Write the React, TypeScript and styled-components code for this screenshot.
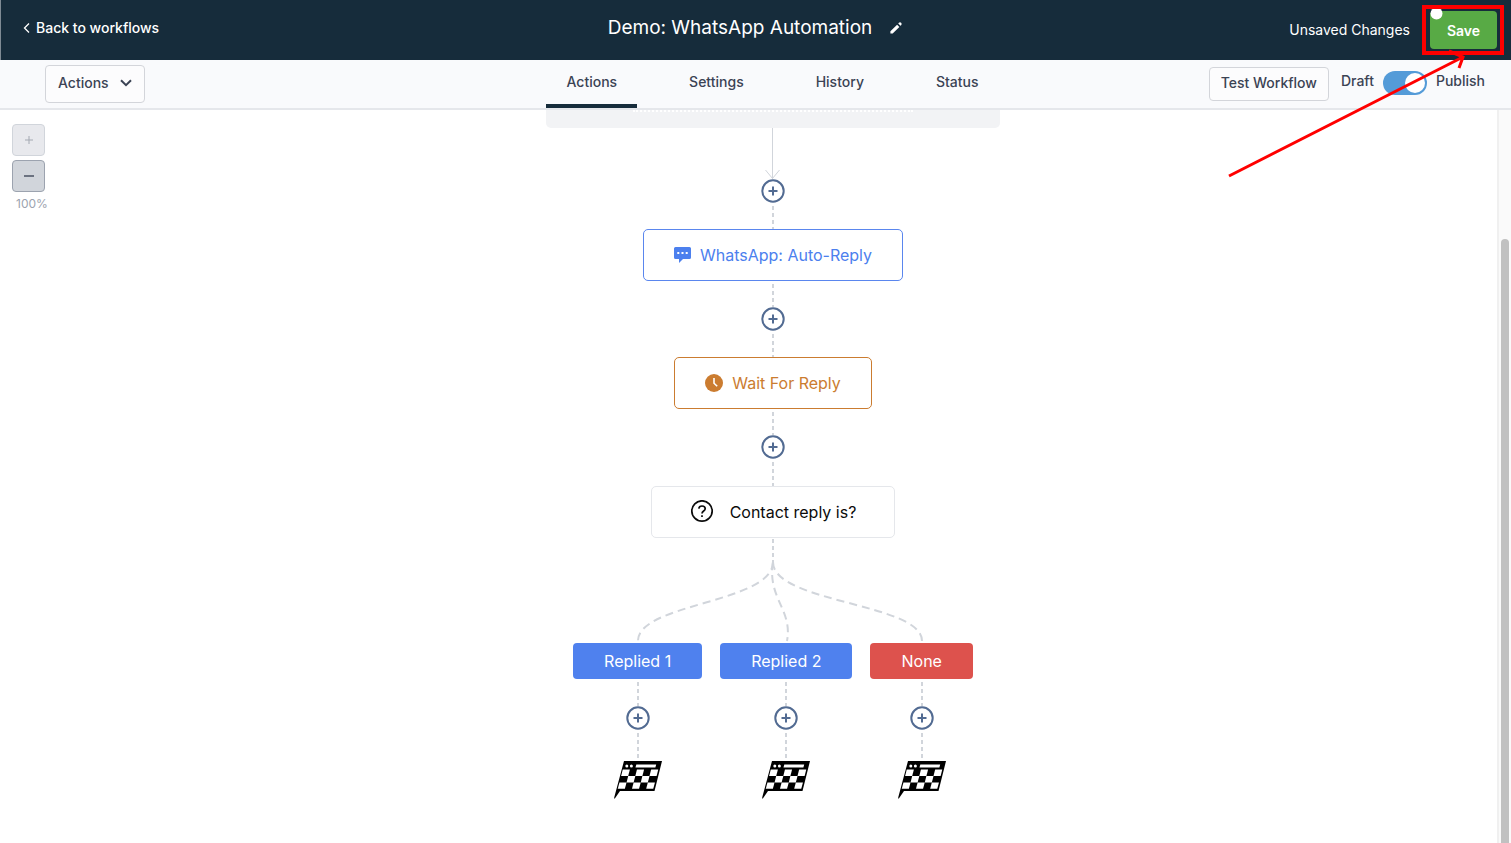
import React, { useState } from 'react';
import styled, { createGlobalStyle, css } from 'styled-components';

const GlobalStyle = createGlobalStyle`
  *, *::before, *::after { box-sizing: border-box; }
  body { margin: 0; background: #ffffff; }
  body, button, input { font-family: Inter, "Liberation Sans", sans-serif; }
`;

const Page = styled.div`
  display: flex;
  flex-direction: column;
  min-height: 100vh;
  color: #3b4354;
  font-size: 14px;
  line-height: 20px;
`;

const Header = styled.header`
  display: grid;
  grid-template-columns: 1fr auto 1fr;
  align-items: center;
  height: 60px;
  padding: 0 14px;
  border-left: 1px solid #7f8b94;
  background: #162c3b;
  color: #ffffff;
`;

const BackLink = styled.a`
  display: inline-flex;
  align-items: center;
  justify-self: start;
  gap: 5px;
  padding: 0 0 4px 7px;
  color: #ffffff;
  font-weight: 500;
  text-decoration: none;
`;

const TitleGroup = styled.div`
  display: flex;
  align-items: center;
  gap: 16px;
  padding-bottom: 4px;
`;

const Title = styled.h1`
  margin: 0;
  font-size: 19px;
  font-weight: 400;
  line-height: 28px;
`;

const IconButton = styled.button`
  display: flex;
  padding: 0;
  border: 0;
  background: none;
  color: inherit;
`;

const SaveGroup = styled.div`
  display: flex;
  align-items: center;
  justify-self: end;
  gap: 20px;
`;

const SaveSlot = styled.div`
  position: relative;
  display: flex;
`;

const SaveButton = styled.button`
  width: 67px;
  height: 38px;
  padding: 0;
  border: 0;
  border-radius: 4px;
  background: #58aa45;
  color: #ffffff;
  font-size: 14px;
  font-weight: 600;
`;

const Callout = styled.svg`
  position: absolute;
  top: -11px;
  right: -14px;
  z-index: 5;
  pointer-events: none;
`;

const SubBar = styled.div`
  display: grid;
  grid-template-columns: 1fr auto 1fr;
  height: 50px;
  padding: 0 11px 0 45px;
  border-bottom: 2px solid #e5e7eb;
  background: #f9fafc;
`;

const OutlineButton = styled.button<{ $size: 'menu' | 'plain' }>`
  display: flex;
  align-items: center;
  justify-content: center;
  gap: 11px;
  border: 1px solid #d3d5da;
  border-radius: 4px;
  background: #fcfcfd;
  color: #3b4354;
  font-size: 14px;
  font-weight: 500;
  line-height: 20px;
  white-space: nowrap;
  ${({ $size }) =>
    $size === 'menu'
      ? css`
          align-self: start;
          justify-self: start;
          height: 38px;
          margin-top: 5px;
          padding: 0 12px 2px;
        `
      : css`
          height: 34px;
          margin-top: 7px;
          padding: 0 11px 2px;
        `}
`;

const Tabs = styled.nav`
  display: flex;
  gap: 32px;
`;

const Tab = styled.a<{ $active?: boolean }>`
  height: 48px;
  padding: 12px 20px 0;
  border-bottom: 4px solid ${({ $active }) => ($active ? '#162c3b' : 'transparent')};
  color: #3b4354;
  font-weight: 500;
  text-decoration: none;
`;

const PublishGroup = styled.div`
  display: flex;
  align-items: flex-start;
  justify-self: end;
  padding-right: 15px;
`;

const SwitchLabel = styled.label`
  display: flex;
  align-items: flex-start;
  gap: 9px;
  margin: 11px 0 0 12px;
  font-weight: 500;
`;

const Switch = styled.input`
  appearance: none;
  display: flex;
  align-items: center;
  width: 44px;
  height: 24px;
  margin: 0;
  padding: 0 2px;
  border-radius: 12px;
  background: #549bd8;
  &::before {
    content: '';
    width: 20px;
    height: 20px;
    border-radius: 50%;
    background: #ffffff;
  }
  &:checked { justify-content: flex-end; }
`;

const Workspace = styled.div`
  display: flex;
  flex: 1;
`;

const ZoomPanel = styled.aside`
  display: flex;
  flex-direction: column;
  gap: 4px;
  width: 49px;
  padding: 14px 0 0 12px;
  color: #9ca3af;
  font-size: 12px;
  line-height: 16px;
`;

const ZoomButton = styled.button<{ $on?: boolean }>`
  display: flex;
  align-items: center;
  justify-content: center;
  width: 33px;
  height: 32px;
  padding: 0;
  border: 1px solid ${({ $on }) => ($on ? '#9ca3af' : '#d1d5db')};
  border-radius: 4px;
  background: ${({ $on }) => ($on ? '#d1d5db' : '#e8e9ed')};
  color: ${({ $on }) => ($on ? '#6b7280' : '#a4a9b2')};
`;

const ZoomValue = styled.output`
  padding-left: 4px;
`;

const Flow = styled.main`
  display: flex;
  flex: 1;
  flex-direction: column;
  align-items: center;
  padding-bottom: 40px;
`;

const TriggerPanel = styled.section`
  display: flex;
  justify-content: center;
  width: 454px;
  height: 18px;
  border-radius: 0 0 5px 5px;
  background: #f2f3f5;
`;

const TriggerEdge = styled.div`
  width: 280px;
  height: 2px;
  border-bottom: 2px dotted #ffffff;
`;

const Connector = styled.div<{ $h: number }>`
  width: 2px;
  height: ${({ $h }) => $h}px;
  background: repeating-linear-gradient(to bottom, transparent 0 3px, #d1d5db 3px 7px);
`;

const AddButton = styled.button`
  display: flex;
  padding: 0;
  border: 0;
  border-radius: 50%;
  background: #ffffff;
  color: #526b92;
`;

const tones = {
  blue: { line: '#5a86ee', text: '#4c80ee' },
  orange: { line: '#cb7c30', text: '#cb7c30' },
  plain: { line: '#e5e7eb', text: '#0b0b0b' },
};

const StepCard = styled.button<{ $tone: keyof typeof tones; $gap: number; $pad: number }>`
  display: flex;
  align-items: center;
  gap: ${({ $gap }) => $gap}px;
  height: 52px;
  padding: 0 ${({ $pad }) => $pad}px;
  border: 1px solid ${({ $tone }) => tones[$tone].line};
  border-radius: 5px;
  background: #ffffff;
  color: ${({ $tone }) => tones[$tone].text};
  font-size: 16px;
  white-space: nowrap;
`;

const Branches = styled.div`
  display: flex;
  gap: 18px;
`;

const Branch = styled.div`
  display: flex;
  flex-direction: column;
  align-items: center;
`;

const BranchButton = styled.button<{ $danger?: boolean }>`
  height: 36px;
  padding: 0 31px;
  border: 0;
  border-radius: 4px;
  background: ${({ $danger }) => ($danger ? '#dd524d' : '#4f81ee')};
  color: #ffffff;
  font-size: 16px;
  white-space: nowrap;
`;

const ScrollTrack = styled.div`
  display: flex;
  width: 14px;
  padding: 129px 2px 0 2px;
  border-left: 2px solid #f0f0f0;
  background: #fafafa;
`;

const ScrollThumb = styled.div`
  flex: 1;
  border-radius: 4px 4px 0 0;
  background: #c1c1c1;
`;

const AddStep = () => (
  <AddButton type="button" aria-label="Add step">
    <svg width="24" height="24" viewBox="0 0 24 24" fill="none" stroke="currentColor" strokeWidth="2">
      <circle cx="12" cy="12" r="10.7" />
      <path d="M12 7.5v9M7.5 12h9" />
    </svg>
  </AddButton>
);

const flagRows = [
  { top: 8.6, bottom: 15, cells: [0, 2, 4] },
  { top: 15, bottom: 21.4, cells: [1, 3] },
  { top: 21.4, bottom: 27.8, cells: [0, 2, 4] },
];

/* The flag leans: its left edge moves 2px to the left for every 8px down. */
const flagX = (col: number, y: number) => 11 - y * 0.26 + col * 7.1;

const FinishFlag = () => (
  <svg width="48" height="38" viewBox="0 0 48 38">
    <path d="M10 0H48L40.5 30H6L0.5 38L0.2 36.5Z" fill="#000000" />
    <circle cx="12.8" cy="5" r="1.5" fill="#ffffff" />
    <circle cx="17.4" cy="5" r="1.5" fill="#ffffff" />
    <path d="M22.3 3.4H42.2L41.4 6.6H21.5Z" fill="#ffffff" />
    {flagRows.map(({ top, bottom, cells }) =>
      cells.map((col) => (
        <path
          key={`${top}-${col}`}
          d={`M${flagX(col, top)} ${top}H${flagX(col + 1, top)}L${flagX(col + 1, bottom)} ${bottom}H${flagX(col, bottom)}Z`}
          fill="#ffffff"
        />
      )),
    )}
  </svg>
);

const branches = [
  { name: 'Replied 1', danger: false },
  { name: 'Replied 2', danger: false },
  { name: 'None', danger: true },
];

export default function App() {
  const [published, setPublished] = useState(true);
  return (
    <Page>
      <GlobalStyle />
      <Header>
        <BackLink href="#workflows">
          <svg width="9" height="12" viewBox="0 0 9 12" fill="none" stroke="currentColor" strokeWidth="1.3">
            <path d="M7 1.5L2.5 6L7 10.5" />
          </svg>
          Back to workflows
        </BackLink>
        <TitleGroup>
          <Title>Demo: WhatsApp Automation</Title>
          <IconButton type="button" aria-label="Rename workflow">
            <svg width="16" height="16" viewBox="0 0 20 20" fill="currentColor">
              <path d="M13.586 3.586a2 2 0 112.828 2.828l-.793.793-2.828-2.828.793-.793zM11.379 5.793L3 14.172V17h2.828l8.38-8.379-2.83-2.828z" />
            </svg>
          </IconButton>
        </TitleGroup>
        <SaveGroup>
          <span>Unsaved Changes</span>
          <SaveSlot>
            <SaveButton type="button">Save</SaveButton>
            <Callout width="290" height="180" viewBox="0 0 290 180" fill="none" stroke="#ff0000" aria-hidden="true">
              <circle cx="215.5" cy="13.5" r="6" fill="#ffffff" stroke="none" />
              <rect x="203" y="7" width="78" height="46" strokeWidth="4" />
              <path d="M8 176L242 57M228 51L242 57L238 68" strokeWidth="3" />
            </Callout>
          </SaveSlot>
        </SaveGroup>
      </Header>
      <SubBar>
        <OutlineButton type="button" $size="menu">
          Actions
          <svg width="12" height="8" viewBox="0 0 12 8" fill="none" stroke="currentColor" strokeWidth="2">
            <path d="M1 1.2L6 6.2L11 1.2" />
          </svg>
        </OutlineButton>
        <Tabs>
          <Tab href="#actions" $active>Actions</Tab>
          <Tab href="#settings">Settings</Tab>
          <Tab href="#history">History</Tab>
          <Tab href="#status">Status</Tab>
        </Tabs>
        <PublishGroup>
          <OutlineButton type="button" $size="plain">Test Workflow</OutlineButton>
          <SwitchLabel>
            Draft
            <Switch type="checkbox" checked={published} onChange={() => setPublished(!published)} />
            Publish
          </SwitchLabel>
        </PublishGroup>
      </SubBar>
      <Workspace>
        <ZoomPanel>
          <ZoomButton type="button" aria-label="Zoom in">
            <svg width="8" height="8" viewBox="0 0 8 8" stroke="currentColor"><path d="M4 0V8M0 4H8" /></svg>
          </ZoomButton>
          <ZoomButton type="button" aria-label="Zoom out" $on>
            <svg width="10" height="8" viewBox="0 0 10 8" stroke="currentColor" strokeWidth="2"><path d="M0 4H10" /></svg>
          </ZoomButton>
          <ZoomValue>100%</ZoomValue>
        </ZoomPanel>
        <Flow>
          <TriggerPanel><TriggerEdge /></TriggerPanel>
          <svg width="16" height="51" viewBox="0 0 16 51" fill="none" stroke="#d1d5db">
            <path d="M7.5 0V51M0.5 42L7.5 50.5L14.5 42" />
          </svg>
          <AddStep />
          <Connector $h={26} />
          <StepCard type="button" $tone="blue" $gap={9} $pad={30}>
            <svg width="17" height="16" viewBox="0 0 17 16">
              <path d="M1.5 0h14A1.5 1.5 0 0 1 17 1.5V10.5A1.5 1.5 0 0 1 15.5 12H9L5 16V12H1.5A1.5 1.5 0 0 1 0 10.5V1.5A1.5 1.5 0 0 1 1.5 0Z" fill="currentColor" />
              <path d="M3.3 5h2v2h-2zM7.5 5h2v2h-2zM11.7 5h2v2h-2z" fill="#ffffff" />
            </svg>
            WhatsApp: Auto-Reply
          </StepCard>
          <Connector $h={26} />
          <AddStep />
          <Connector $h={26} />
          <StepCard type="button" $tone="orange" $gap={9} $pad={30}>
            <svg width="18" height="18" viewBox="0 0 18 18">
              <circle cx="9" cy="9" r="9" fill="currentColor" />
              <path d="M9 4V9.2L12.2 12.3" fill="none" stroke="#ffffff" strokeWidth="1.6" />
            </svg>
            Wait For Reply
          </StepCard>
          <Connector $h={26} />
          <AddStep />
          <Connector $h={27} />
          <StepCard type="button" $tone="plain" $gap={16} $pad={38}>
            <svg width="24" height="24" viewBox="0 0 24 24" fill="none" stroke="currentColor" strokeWidth="1.7">
              <circle cx="12" cy="11" r="10.2" />
              <path d="M8.8 8.7C9 7 10.3 6 12 6C13.9 6 15.2 7.1 15.2 8.7C15.2 11 12 10.9 12 13.4" />
              <path d="M12 15.2V17" />
            </svg>
            Contact reply is?
          </StepCard>
          <svg width="400" height="105" viewBox="0 0 400 105" fill="none" stroke="#d1d5db" strokeWidth="2">
            <path d="M200 1V25" strokeDasharray="4 3" />
            <path d="M200 24C200 65 65 65 65 103" strokeDasharray="8 5" />
            <path d="M200 24C194 60 220 72 214 103" strokeDasharray="8 5" />
            <path d="M200 24C200 65 349 65 349 103" strokeDasharray="8 5" />
          </svg>
          <Branches>
            {branches.map((branch) => (
              <Branch key={branch.name}>
                <BranchButton type="button" $danger={branch.danger}>{branch.name}</BranchButton>
                <Connector $h={27} />
                <AddStep />
                <Connector $h={31} />
                <FinishFlag />
              </Branch>
            ))}
          </Branches>
        </Flow>
        <ScrollTrack><ScrollThumb /></ScrollTrack>
      </Workspace>
    </Page>
  );
}
